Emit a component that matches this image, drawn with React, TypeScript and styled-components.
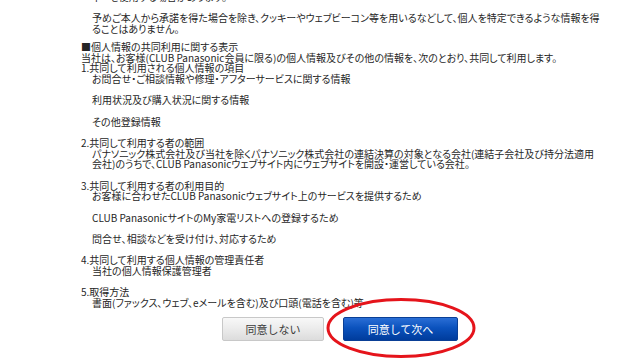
import React from "react";
import styled, { createGlobalStyle } from "styled-components";

const Global = createGlobalStyle`
  html, body { margin: 0; padding: 0; background: #ffffff; }
  body {
    width: 640px;
    height: 360px;
    overflow: hidden;
    font-family: "Noto Sans CJK JP", "Noto Sans", sans-serif;
    color: #262626;
  }
`;

const Page = styled.div`
  width: 640px;
  height: 360px;
  overflow: hidden;
`;

const Content = styled.div`
  width: 518px;
  margin: -8px 0 0 81px;
  font-size: 10px;
  line-height: 10.67px;
  font-feature-settings: "palt";
`;

const Block = styled.div<{ $gap?: number }>`
  margin-top: ${(p) => p.$gap ?? 0}px;
`;

const Line = styled.div<{ $indent?: boolean }>`
  white-space: nowrap;
  height: 10.67px;
  padding-left: ${(p) => (p.$indent ? 11 : 0)}px;
`;

const Blank = styled.div`
  height: 10.67px;
`;

const ButtonRow = styled.div`
  display: flex;
  justify-content: center;
  gap: 19px;
  margin-top: 9px;
`;

const BaseButton = styled.button`
  height: 24px;
  border-radius: 2px;
  font-family: "Noto Sans CJK JP", "Noto Sans", sans-serif;
  font-size: 11px;
  padding: 0;
  cursor: pointer;
`;

const GrayButton = styled(BaseButton)`
  width: 102px;
  color: #3c3c3c;
  border: 1px solid #c8c8c8;
  background: linear-gradient(#f8f8f8, #ebebeb 50%, #dcdcdc);
`;

const BlueWrap = styled.div`
  position: relative;
`;

const BlueButton = styled(BaseButton)`
  width: 115px;
  color: #ffffff;
  border: 1px solid #0a3f96;
  background: linear-gradient(#2a6ed6, #0b52bd 45%, #003c9c);
`;

const Ring = styled.svg`
  position: absolute;
  left: -17px;
  top: -19px;
  width: 150px;
  height: 60px;
  pointer-events: none;
  overflow: visible;
`;

export default function App() {
  return (
    <Page>
      <Global />
      <Content>
        <Block>
          <Line $indent>ィーを使用する場合があります。</Line>
          <Blank />
          <Line $indent>
            予めご本人から承諾を得た場合を除き、クッキーやウェブビーコン等を用いるなどして、個人を特定できるような情報を得
          </Line>
          <Line $indent>ることはありません。</Line>
        </Block>
        <Block $gap={7.4}>
          <Line>■個人情報の共同利用に関する表示</Line>
          <Line>
            当社は、お客様(CLUB Panasonic会員に限る)の個人情報及びその他の情報を、次のとおり、共同して利用します。
          </Line>
          <Line>1.共同して利用される個人情報の項目</Line>
          <Line $indent>お問合せ・ご相談情報や修理・アフターサービスに関する情報</Line>
          <Blank />
          <Line $indent>利用状況及び購入状況に関する情報</Line>
          <Blank />
          <Line $indent>その他登録情報</Line>
          <Blank />
          <Line>2.共同して利用する者の範囲</Line>
          <Line $indent>
            パナソニック株式会社及び当社を除くパナソニック株式会社の連結決算の対象となる会社(連結子会社及び持分法適用
          </Line>
          <Line $indent>
            会社)のうちで、CLUB Panasonicウェブサイト内にウェブサイトを開設・運営している会社。
          </Line>
          <Blank />
          <Line>3.共同して利用する者の利用目的</Line>
          <Line $indent>お客様に合わせたCLUB Panasonicウェブサイト上のサービスを提供するため</Line>
          <Blank />
          <Line $indent>CLUB PanasonicサイトのMy家電リストへの登録するため</Line>
          <Blank />
          <Line $indent>問合せ、相談などを受け付け、対応するため</Line>
          <Blank />
          <Line>4.共同して利用する個人情報の管理責任者</Line>
          <Line $indent>当社の個人情報保護管理者</Line>
          <Blank />
          <Line>5.取得方法</Line>
          <Line $indent>書面(ファックス、ウェブ、eメールを含む)及び口頭(電話を含む)等</Line>
        </Block>
        <ButtonRow>
          <GrayButton>同意しない</GrayButton>
          <BlueWrap>
            <BlueButton>同意して次へ</BlueButton>
            <Ring viewBox="0 0 150 60">
              <ellipse
                cx="75"
                cy="30"
                rx="73"
                ry="28.5"
                fill="none"
                stroke="#e5141b"
                strokeWidth="3"
              />
            </Ring>
          </BlueWrap>
        </ButtonRow>
      </Content>
    </Page>
  );
}
